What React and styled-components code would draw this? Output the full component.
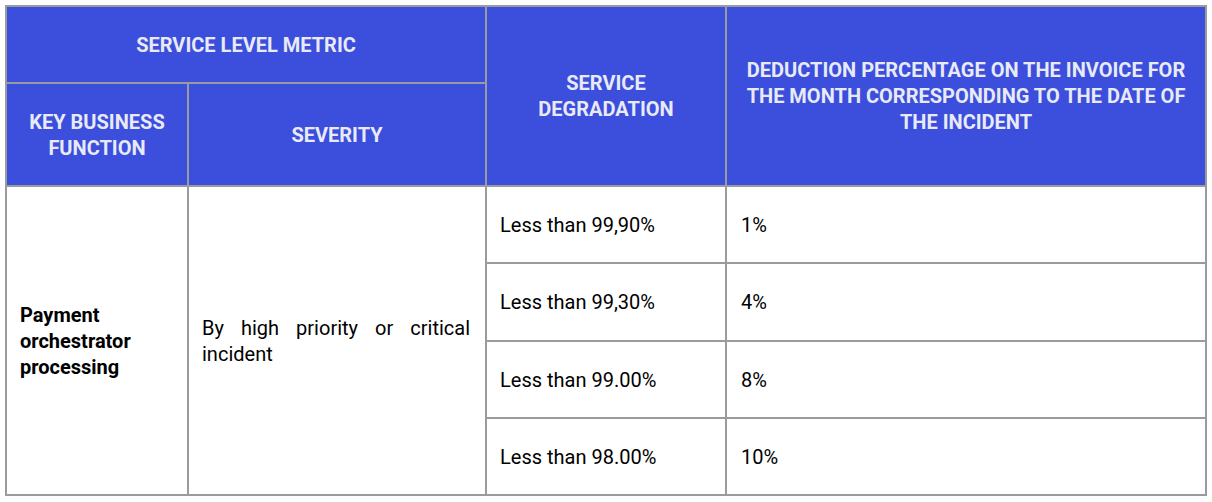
import React from "react";
import styled, { createGlobalStyle } from "styled-components";

const GlobalStyle = createGlobalStyle`
	html, body {
		margin: 0;
		padding: 0;
		background: #fff;
	}
	body {
		font-family: Roboto, "Liberation Sans", sans-serif;
	}
`;

const Page = styled.div`
	padding: 5px;
`;

const Grid = styled.div`
	display: grid;
	grid-template-columns: 180px 296px 238px 478px;
	grid-template-rows: 75px 101px 75px 76px 75px 75px;
	gap: 2px;
	padding: 2px;
	width: 1202px;
	box-sizing: border-box;
	background: #999b9f;
`;

const Head = styled.div`
	grid-column: ${(p) => p.col};
	grid-row: ${(p) => p.row};
	display: flex;
	align-items: center;
	justify-content: center;
	text-align: center;
	padding: 0 ${(p) => p.pad || 10}px;
	background: #3c4edc;
	color: #e8eaf7;
	font-size: 20px;
	font-weight: 700;
	line-height: 26px;
	text-transform: uppercase;
`;

const Cell = styled.div`
	grid-column: ${(p) => p.col};
	grid-row: ${(p) => p.row};
	display: flex;
	align-items: center;
	padding: 0 ${(p) => p.padRight || 13}px 0 ${(p) => p.padLeft || 13}px;
	background: #fff;
	color: #000;
	font-size: 20px;
	font-weight: ${(p) => (p.bold ? 700 : 400)};
	line-height: 26px;
	text-align: ${(p) => (p.justify ? "justify" : "left")};
`;

const rows = [
	["Less than 99,90%", "1%"],
	["Less than 99,30%", "4%"],
	["Less than 99.00%", "8%"],
	["Less than 98.00%", "10%"],
];

const App = () => {
	return (
		<Page>
			<GlobalStyle />
			<Grid>
				<Head col="1 / 3" row="1">Service level metric</Head>
				<Head col="3" row="1 / 3" pad={40}>Service degradation</Head>
				<Head col="4" row="1 / 3" pad={16}>
					Deduction percentage on the invoice for the month corresponding to the date of the incident
				</Head>
				<Head col="1" row="2">Key business function</Head>
				<Head col="2" row="2">Severity</Head>

				<Cell col="1" row="3 / 7" bold>
					Payment orchestrator processing
				</Cell>
				<Cell col="2" row="3 / 7" justify padRight={15}>
					<span>By high priority or critical incident</span>
				</Cell>
				{rows.map(([degradation, deduction], i) => (
					<React.Fragment key={degradation}>
						<Cell col="3" row={i + 3}>{degradation}</Cell>
						<Cell col="4" row={i + 3} padLeft={14}>{deduction}</Cell>
					</React.Fragment>
				))}
			</Grid>
		</Page>
	);
};

export default App;
